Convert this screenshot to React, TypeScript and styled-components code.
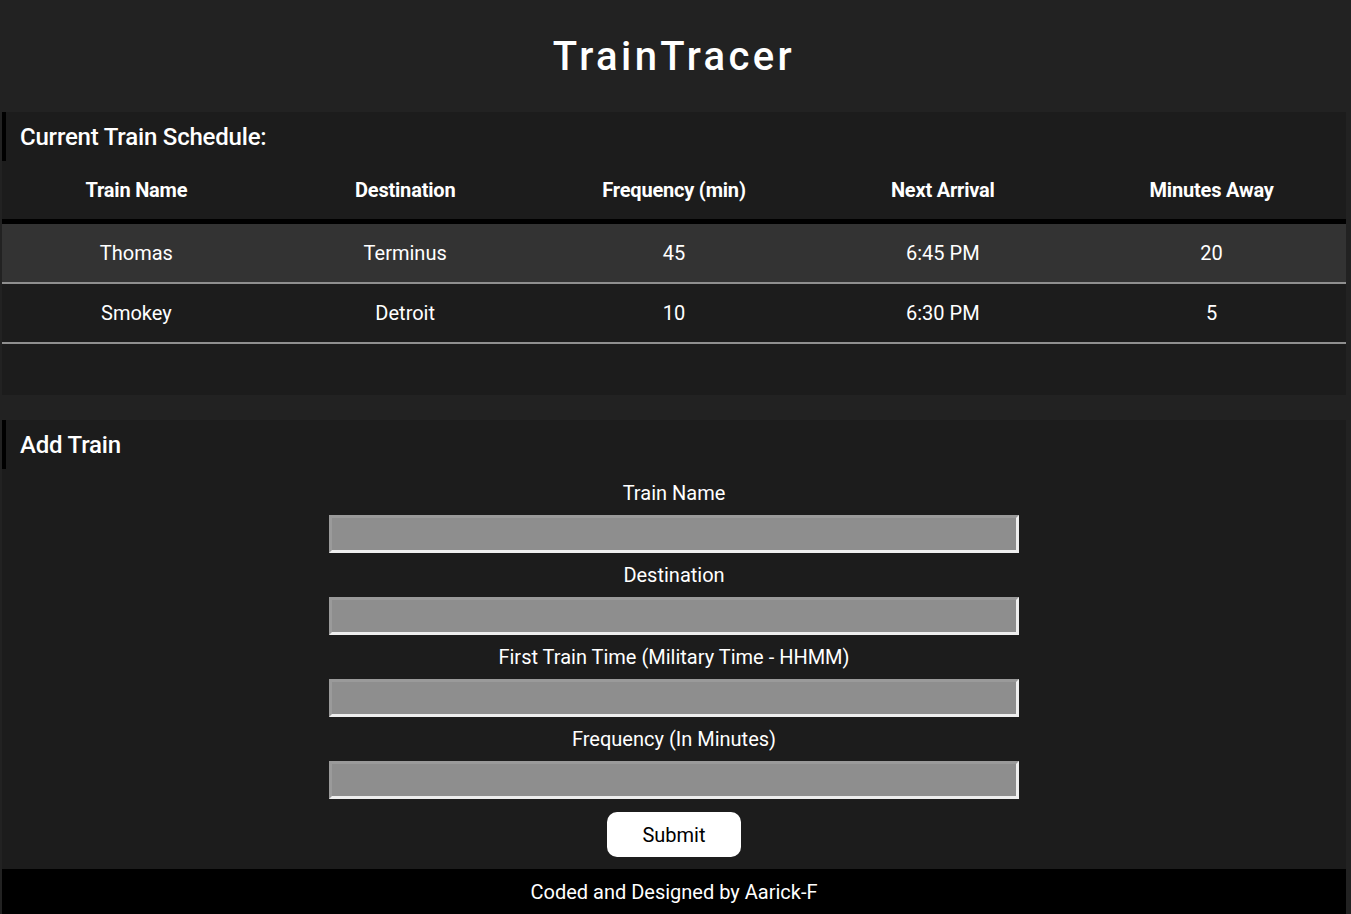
import React from "react";
import styled, { createGlobalStyle } from "styled-components";

const GlobalStyle = createGlobalStyle`
  body {
    margin: 0;
    background: #222222;
    font-family: Roboto, "Liberation Sans", Arial, sans-serif;
    color: #ffffff;
  }
`;

const trains = [
  { name: "Thomas", destination: "Terminus", frequency: 45, next: "6:45 PM", away: 20 },
  { name: "Smokey", destination: "Detroit", frequency: 10, next: "6:30 PM", away: 5 },
];

const fields = [
  "Train Name",
  "Destination",
  "First Train Time (Military Time - HHMM)",
  "Frequency (In Minutes)",
];

const App: React.FC = () => {
  return (
    <>
      <GlobalStyle />
      <Page>
        <Header>
          <Title>TrainTracer</Title>
        </Header>

        <SchedulePanel>
          <PanelHeading>Current Train Schedule:</PanelHeading>
          <Table>
            <thead>
              <tr>
                <HeadCell>Train Name</HeadCell>
                <HeadCell>Destination</HeadCell>
                <HeadCell>Frequency (min)</HeadCell>
                <HeadCell>Next Arrival</HeadCell>
                <HeadCell>Minutes Away</HeadCell>
              </tr>
            </thead>
            <tbody>
              {trains.map((t, i) => (
                <Row key={t.name} $striped={i % 2 === 0}>
                  <Cell>{t.name}</Cell>
                  <Cell>{t.destination}</Cell>
                  <Cell>{t.frequency}</Cell>
                  <Cell>{t.next}</Cell>
                  <Cell>{t.away}</Cell>
                </Row>
              ))}
            </tbody>
          </Table>
        </SchedulePanel>

        <FormPanel>
          <PanelHeading>Add Train</PanelHeading>
          <Form onSubmit={(e) => e.preventDefault()}>
            {fields.map((f) => (
              <Field key={f}>
                <Label>{f}</Label>
                <Input type="text" />
              </Field>
            ))}
            <SubmitButton type="submit">Submit</SubmitButton>
          </Form>
        </FormPanel>

        <Footer>Coded and Designed by Aarick-F</Footer>
      </Page>
    </>
  );
};

export default App;

const Page = styled.div`
  padding: 0 5px 0 2px;
  display: flex;
  flex-direction: column;
`;

const Header = styled.header`
  height: 112px;
  display: flex;
  align-items: center;
  justify-content: center;
`;

const Title = styled.h1`
  margin: 0;
  font-size: 40px;
  font-weight: 500;
  letter-spacing: 3.4px;
  color: #ffffff;
`;

const Panel = styled.section`
  background: #1c1c1c;
`;

const SchedulePanel = styled(Panel)`
  padding-bottom: 51px;
  margin-bottom: 25px;
`;

const FormPanel = styled(Panel)`
  padding-bottom: 12px;
`;

const PanelHeading = styled.h2`
  margin: 0;
  height: 49px;
  display: flex;
  align-items: center;
  padding-left: 14px;
  border-left: 4px solid #000000;
  font-size: 24px;
  font-weight: 500;
  letter-spacing: -0.2px;
`;

const Table = styled.table`
  width: 100%;
  border-collapse: collapse;
  table-layout: fixed;
`;

const HeadCell = styled.th`
  height: 58px;
  padding: 0;
  font-size: 20px;
  font-weight: 700;
  letter-spacing: -0.2px;
  text-align: center;
  border-bottom: 5px solid #000000;
`;

const Row = styled.tr<{ $striped: boolean }>`
  background: ${(p) => (p.$striped ? "#333333" : "transparent")};
  border-bottom: 2px solid #8f8f8f;
`;

const Cell = styled.td`
  height: 58px;
  padding: 0;
  font-size: 20px;
  text-align: center;
`;

const Form = styled.form`
  display: flex;
  flex-direction: column;
  align-items: center;
  padding-top: 12px;
`;

const Field = styled.div`
  display: flex;
  flex-direction: column;
  align-items: center;
  gap: 10px;
  margin-bottom: 10px;
`;

const Label = styled.label`
  font-size: 20px;
  line-height: 24px;
`;

const Input = styled.input`
  box-sizing: border-box;
  width: 690px;
  height: 38px;
  background: #8e8e8e;
  border: 3px inset #eeeeee;
  outline: none;
  font-size: 18px;
`;

const SubmitButton = styled.button`
  margin-top: 3px;
  width: 134px;
  height: 45px;
  border: none;
  border-radius: 10px;
  background: #ffffff;
  color: #000000;
  font-family: Roboto, "Liberation Sans", Arial, sans-serif;
  font-size: 20px;
  cursor: pointer;
`;

const Footer = styled.footer`
  height: 45px;
  background: #000000;
  display: flex;
  align-items: center;
  justify-content: center;
  font-size: 20px;
`;
